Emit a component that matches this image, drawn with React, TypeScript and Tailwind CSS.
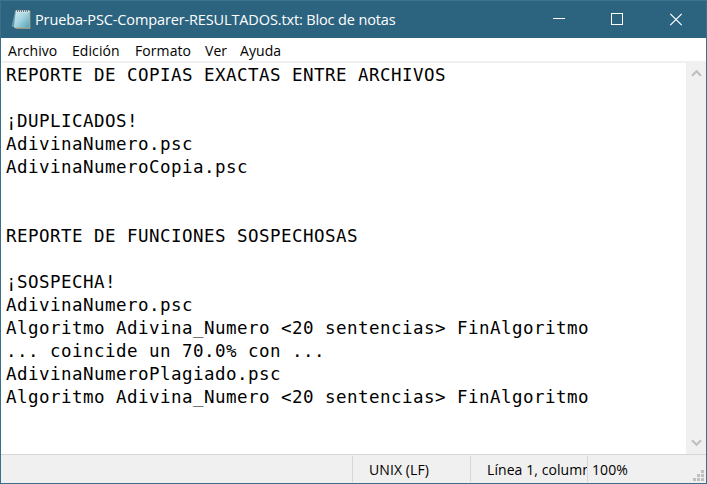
import React from "react";

const lines = [
  "REPORTE DE COPIAS EXACTAS ENTRE ARCHIVOS",
  "",
  "¡DUPLICADOS!",
  "AdivinaNumero.psc",
  "AdivinaNumeroCopia.psc",
  "",
  "",
  "REPORTE DE FUNCIONES SOSPECHOSAS",
  "",
  "¡SOSPECHA!",
  "AdivinaNumero.psc",
  "Algoritmo Adivina_Numero <20 sentencias> FinAlgoritmo",
  "... coincide un 70.0% con ...",
  "AdivinaNumeroPlagiado.psc",
  "Algoritmo Adivina_Numero <20 sentencias> FinAlgoritmo",
];

function NotepadIcon() {
  return (
    <svg width="20" height="21" viewBox="0 0 20 21" className="shrink-0">
      <defs>
        <linearGradient id="page" x1="0" y1="0" x2="1" y2="1">
          <stop offset="0" stopColor="#d5edf3" />
          <stop offset="0.5" stopColor="#a4d3df" />
          <stop offset="1" stopColor="#4ba5bd" />
        </linearGradient>
      </defs>
      <path d="M4 2 L0.5 17.5 L5 18.5 Z" fill="#5f9cb2" />
      <path d="M5 2 H19.3 V19.8 H5 L3 18.5 Z" fill="#b6a887" />
      <path d="M4.8 1.5 H18.3 V18.5 H3 Z" fill="url(#page)" />
      <path d="M4.8 1.5 H18.3 V3.5 H4.5 Z" fill="#dfe5e7" />
      <path d="M6.5 0.5 V3 M8.5 0.5 V3 M10.5 0.5 V3 M12.5 0.5 V3 M14.5 0.5 V3 M16.5 0.5 V3" stroke="#5b6d75" strokeWidth="0.9" />
    </svg>
  );
}

function TitleBar() {
  return (
    <header className="flex h-[38px] shrink-0 items-center border-t border-[#3f738d] bg-[#2c647f] pl-2.5 text-white">
      <NotepadIcon />
      <h1 className="ml-1 grow whitespace-nowrap text-[14.5px] leading-5 tracking-[-0.13px]">
        Prueba-PSC-Comparer-RESULTADOS.txt: Bloc de notas
      </h1>
      <div className="flex w-[176px] shrink-0 items-center">
        <svg width="58" height="14" viewBox="0 0 58 14" shapeRendering="crispEdges">
          <path d="M23 5.5h12" stroke="white" fill="none" />
        </svg>
        <svg width="58" height="14" viewBox="0 0 58 14" shapeRendering="crispEdges">
          <rect x="23.5" y="0.5" width="11" height="11" stroke="white" fill="none" />
        </svg>
        <svg width="58" height="14" viewBox="0 0 58 14">
          <path d="M24.3 0.8l11.4 11.4M35.7 0.8L24.3 12.2" stroke="white" strokeWidth="1.2" fill="none" />
        </svg>
      </div>
    </header>
  );
}

function MenuBar() {
  return (
    <nav className="flex h-[25px] shrink-0 whitespace-nowrap border-b-2 border-[#f0f0f0] pl-[7px] text-[14px] leading-[25px] tracking-[0.08px]">
      <span className="w-[64px]">Archivo</span>
      <span className="w-[63px]">Edición</span>
      <span className="w-[70px]">Formato</span>
      <span className="w-[35px]">Ver</span>
      <span>Ayuda</span>
    </nav>
  );
}

function Arrow({ down = false }: { down?: boolean }) {
  return (
    <svg width="11" height="9" viewBox="0 0 11 9" className={down ? "rotate-180" : ""}>
      <path d="M1 6.7l4.5-4.5L10 6.7" stroke="#bfbfbf" strokeWidth="2.2" fill="none" />
    </svg>
  );
}

function StatusBar() {
  return (
    <footer className="flex h-[29px] shrink-0 whitespace-nowrap border-t border-[#d7d7d7] bg-[#f0f0f0] pt-px text-[14px] leading-[27px] tracking-[0.08px]">
      <div className="w-[351px]" />
      <div className="h-[26px] w-[118px] border-l border-[#d7d7d7] pl-4">UNIX (LF)</div>
      <div className="h-[26px] w-[117px] overflow-hidden border-l border-[#d7d7d7] pl-4">Línea 1, column</div>
      <div className="h-[26px] grow border-l border-[#d7d7d7] pl-1">100%</div>
      <svg width="13" height="26" viewBox="0 0 13 26" fill="#bfbfbf" shapeRendering="crispEdges">
        <path d="M8 14h3v3H8zM4 18h3v3H4zM8 18h3v3H8zM0 22h3v3H0zM4 22h3v3H4zM8 22h3v3H8z" />
      </svg>
    </footer>
  );
}

export default function App() {
  return (
    <div className="flex h-[484px] w-[707px] flex-col overflow-hidden border-x border-b border-[#3a6f8a] bg-white font-['Open_Sans','Noto_Sans',sans-serif] text-black">
      <TitleBar />
      <MenuBar />
      <main className="flex min-h-0 grow">
        <div className="grow whitespace-pre pl-[5px] pt-px font-['DejaVu_Sans_Mono',monospace] text-[17.5px] leading-[23px] tracking-[0.465px]">
          {lines.map((line, i) => (
            <div key={i} className="h-[23px]">{line}</div>
          ))}
        </div>
        <div className="flex w-5 shrink-0 flex-col items-center justify-between bg-[#f0f0f0] pb-[7px] pt-1.5">
          <Arrow />
          <Arrow down />
        </div>
      </main>
      <StatusBar />
    </div>
  );
}
